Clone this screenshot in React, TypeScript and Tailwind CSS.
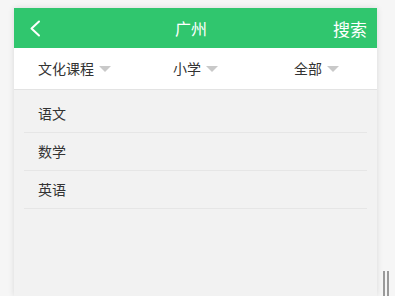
const filters = ['文化课程', '小学', '全部']
const subjects = ['语文', '数学', '英语']

export default function App() {
  return (
    <div
      className="relative h-[296px] w-full overflow-hidden bg-[#f6f6f6] pl-[14px] pt-[8px]"
      style={{ fontFamily: '"Noto Sans CJK SC", "Noto Sans", sans-serif' }}
    >
      <div className="flex h-full w-[363px] flex-col bg-[#f2f2f2] shadow-[0_0_6px_rgba(0,0,0,0.12)]">
        <header className="flex h-[40px] items-center justify-between bg-[#30c66e] pl-[15px] pr-[10px] text-white">
          <svg width="12" height="17" viewBox="0 0 12 17" fill="none">
            <polyline
              points="10,1.5 2.5,8.5 10,15.5"
              stroke="white"
              strokeWidth="2"
              strokeLinecap="round"
              strokeLinejoin="round"
            />
          </svg>
          <h1 className="ml-[8px] text-[16px] font-normal leading-none">广州</h1>
          <span className="text-[17px] leading-none">搜索</span>
        </header>

        <nav className="grid h-[42px] grid-cols-3 border-b border-[#e3e3e3] bg-white">
          {filters.map((item, index) => (
            <div
              key={index}
              className="flex items-center justify-center gap-[5px] text-[14px] text-[#333]"
            >
              <span>{item}</span>
              <span className="h-0 w-0 border-x-[6px] border-t-[6px] border-x-transparent border-t-[#c9c9c9]" />
            </div>
          ))}
        </nav>

        <ul className="mx-[10px] pt-[5px]">
          {subjects.map((item, index) => (
            <li
              key={index}
              className="flex h-[38px] items-center border-b border-[#e6e6e6] px-[14px] text-[14px] text-[#333]"
            >
              {item}
            </li>
          ))}
        </ul>
      </div>

      <div className="absolute bottom-0 right-[6px] flex h-[25px] gap-[2px]">
        <span className="w-[2px] bg-[#9a9a9a]" />
        <span className="w-[2px] bg-[#9a9a9a]" />
      </div>
    </div>
  )
}
